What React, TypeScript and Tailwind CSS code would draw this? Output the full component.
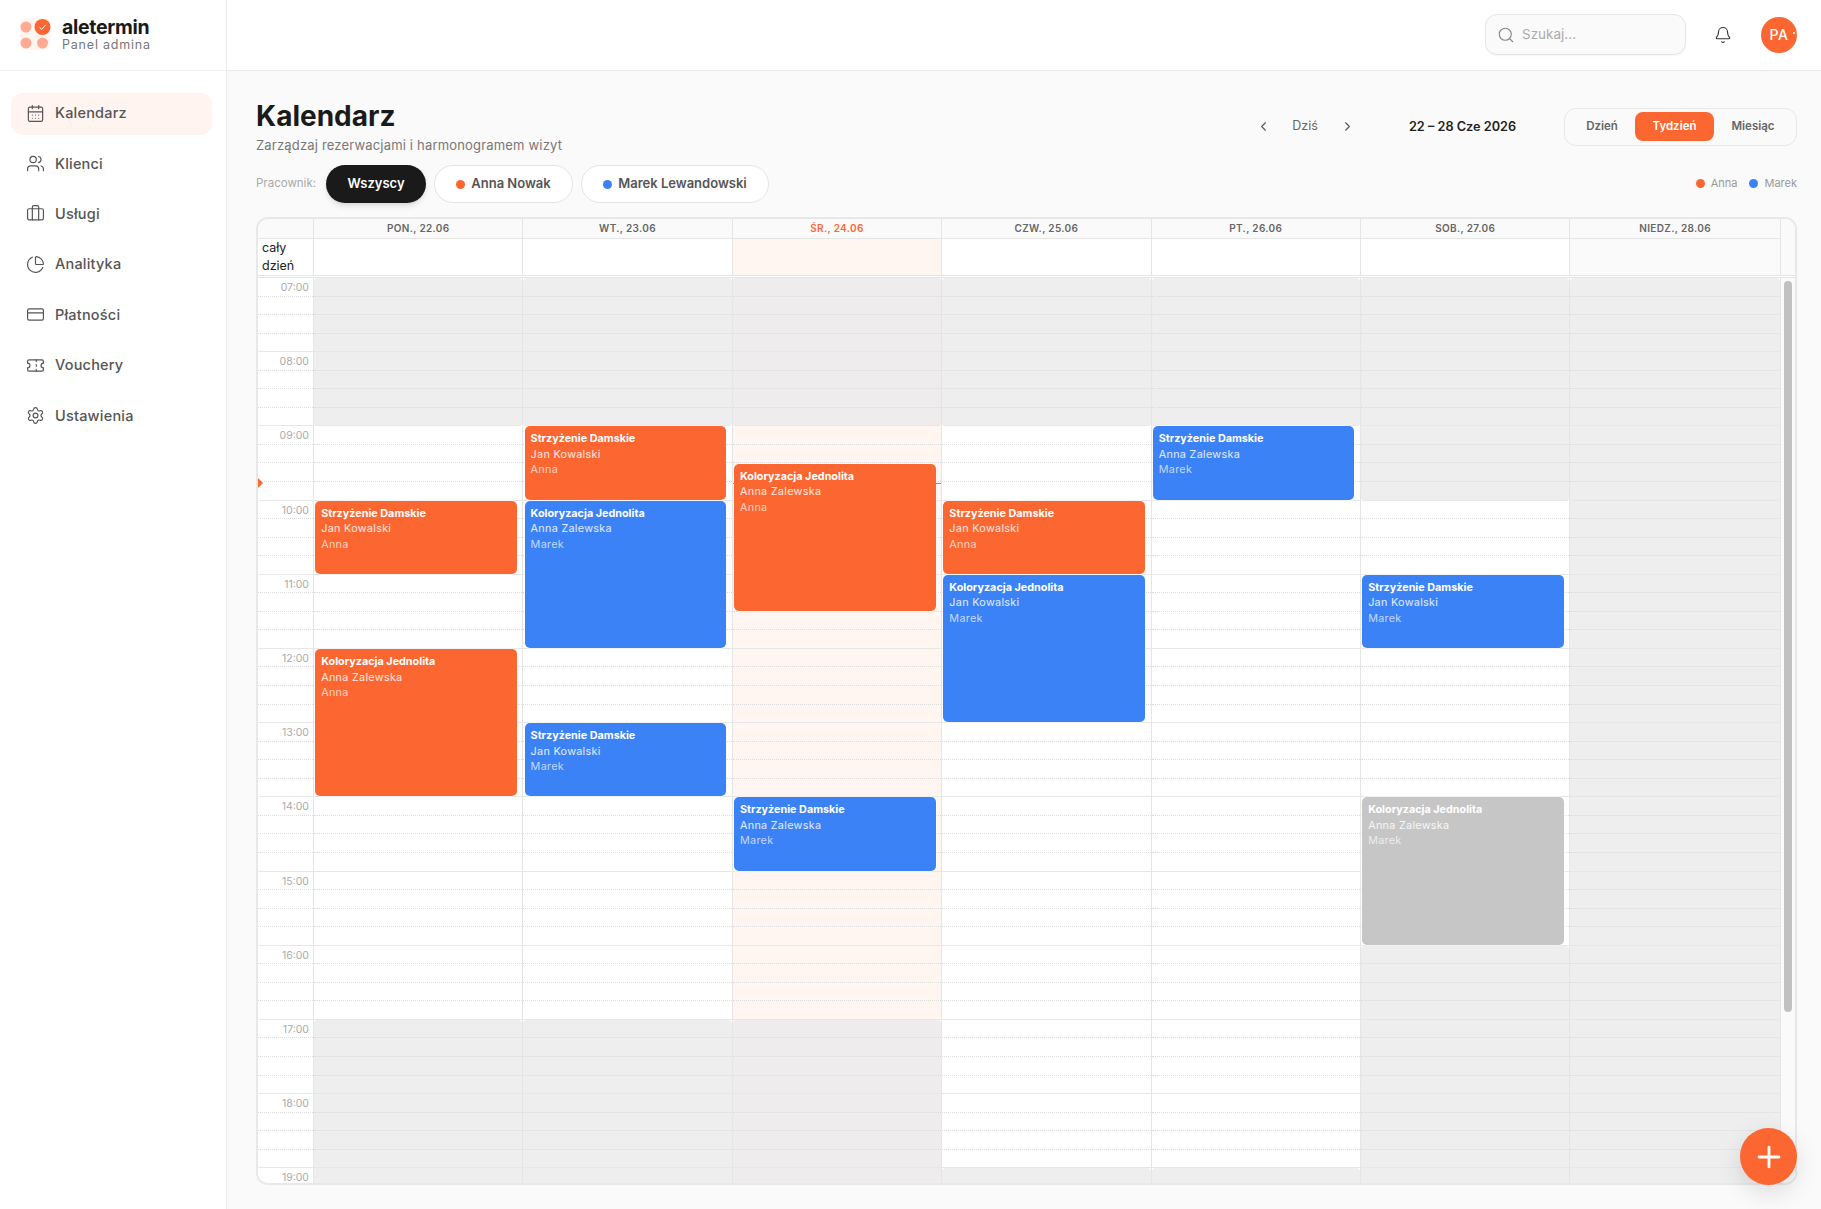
import {
  Bell,
  Briefcase,
  CalendarDays,
  ChartPie,
  ChevronLeft,
  ChevronRight,
  CreditCard,
  Plus,
  Search,
  Settings,
  Ticket,
  Users,
} from "lucide-react";

const HOUR = 74.2;
const SLOT = HOUR / 4;
const hours = [7, 8, 9, 10, 11, 12, 13, 14, 15, 16, 17, 18, 19];
const cols = "grid-cols-[55px_repeat(6,209.4px)_1fr_15px]";

const menuItems = [
  { id: "calendar", label: "Kalendarz", icon: CalendarDays, active: true },
  { id: "clients", label: "Klienci", icon: Users },
  { id: "services", label: "Usługi", icon: Briefcase },
  { id: "analytics", label: "Analityka", icon: ChartPie },
  { id: "payments", label: "Płatności", icon: CreditCard },
  { id: "vouchers", label: "Vouchery", icon: Ticket },
  { id: "settings", label: "Ustawienia", icon: Settings },
];

type Tone = "orange" | "blue" | "grey";
interface CalendarEvent {
  title: string;
  client: string;
  staff: string;
  start: number;
  end: number;
  tone: Tone;
}
interface Day {
  label: string;
  open: [number, number];
  today?: boolean;
  events: CalendarEvent[];
}

const cut = "Strzyżenie Damskie";
const color = "Koloryzacja Jednolita";
const jan = "Jan Kowalski";
const zal = "Anna Zalewska";

const days: Day[] = [
  {
    label: "PON., 22.06",
    open: [9, 17],
    events: [
      { title: cut, client: jan, staff: "Anna", start: 10, end: 11, tone: "orange" },
      { title: color, client: zal, staff: "Anna", start: 12, end: 14, tone: "orange" },
    ],
  },
  {
    label: "WT., 23.06",
    open: [9, 17],
    events: [
      { title: cut, client: jan, staff: "Anna", start: 9, end: 10, tone: "orange" },
      { title: color, client: zal, staff: "Marek", start: 10, end: 12, tone: "blue" },
      { title: cut, client: jan, staff: "Marek", start: 13, end: 14, tone: "blue" },
    ],
  },
  {
    label: "ŚR., 24.06",
    open: [9, 17],
    today: true,
    events: [
      { title: color, client: zal, staff: "Anna", start: 9.5, end: 11.5, tone: "orange" },
      { title: cut, client: zal, staff: "Marek", start: 14, end: 15, tone: "blue" },
    ],
  },
  {
    label: "CZW., 25.06",
    open: [9, 19],
    events: [
      { title: cut, client: jan, staff: "Anna", start: 10, end: 11, tone: "orange" },
      { title: color, client: jan, staff: "Marek", start: 11, end: 13, tone: "blue" },
    ],
  },
  {
    label: "PT., 26.06",
    open: [9, 19],
    events: [{ title: cut, client: zal, staff: "Marek", start: 9, end: 10, tone: "blue" }],
  },
  {
    label: "SOB., 27.06",
    open: [10, 16],
    events: [
      { title: cut, client: jan, staff: "Marek", start: 11, end: 12, tone: "blue" },
      { title: color, client: zal, staff: "Marek", start: 14, end: 16, tone: "grey" },
    ],
  },
  { label: "NIEDZ., 28.06", open: [0, 0], events: [] },
];

const toneClass: Record<Tone, string> = {
  orange: "bg-[#fc6630]",
  blue: "bg-[#3b82f6]",
  grey: "bg-[#c6c6c6]",
};

function Logo() {
  return (
    <svg width="34" height="34" viewBox="0 0 34 34" className="shrink-0 -mt-[2px]">
      <rect x="2" y="1" width="30" height="32" rx="6" fill="#fff6f2" />
      <circle cx="8" cy="10" r="5.5" fill="#ffab94" />
      <circle cx="24.5" cy="10" r="8" fill="#fc6630" />
      <path d="M21.5 10.2l2.2 2.1 3.8-4.2" fill="none" stroke="#fff" strokeWidth="1" />
      <circle cx="8" cy="26" r="5.5" fill="#ffab94" />
      <circle cx="24.5" cy="26" r="5.5" fill="#ffab94" />
    </svg>
  );
}

function SidebarNav() {
  return (
    <aside className="w-[227px] shrink-0 bg-white border-r border-[#e8e8e8] flex flex-col">
      <div className="h-[71px] shrink-0 border-b border-[#f2f2f2] flex items-center pl-[18px] pb-[1px] gap-[10px]">
        <Logo />
        <div className="flex flex-col">
          <span className="text-[19.5px] leading-[20px] font-bold text-[#1a1a1a] tracking-[-0.3px]">aletermin</span>
          <span className="text-[12.5px] leading-[15px] text-[#777777] tracking-[0.8px]">Panel admina</span>
        </div>
      </div>
      <nav className="flex flex-col gap-2 pl-[11px] pr-[14px] pt-[22px]">
        {menuItems.map((item) => (
          <div
            key={item.id}
            className={`h-[42.4px] rounded-xl flex items-center gap-[10px] pl-[15px] pb-[2px] text-[14.5px] font-medium tracking-[0.2px] text-[#555555] ${
              item.active ? "bg-[#fff4f0]" : ""
            }`}
          >
            <item.icon className="w-[19px] h-[19px] shrink-0" strokeWidth={1.5} />
            {item.label}
          </div>
        ))}
      </nav>
    </aside>
  );
}

function TopBar() {
  return (
    <header className="h-[71px] shrink-0 bg-white border-b border-[#e8e8e8] flex items-center justify-end pr-6 pb-[1px]">
      <div className="w-[201px] h-[41px] rounded-xl border border-[#e5e5e5] bg-[#fafafa] flex items-center gap-[7px] pl-[11px] text-[13.5px] text-[#aaaaaa] shadow-[0_1px_2px_rgba(0,0,0,0.04)]">
        <Search className="w-[18px] h-[18px] text-[#888888]" strokeWidth={1.5} />
        Szukaj...
      </div>
      <Bell className="w-[18px] h-[18px] ml-[28px] text-[#333333]" strokeWidth={1.5} />
      <div className="relative w-9 h-9 rounded-full bg-[#fc6630] ml-[29px] flex items-center justify-center text-[14px] font-medium text-white tracking-[0.6px]">
        PA
        <span className="absolute right-[2px] top-[15px] w-[2px] h-[2px] rounded-full bg-white" />
      </div>
    </header>
  );
}

function TitleRow() {
  return (
    <div className="h-[56px] shrink-0 flex items-center justify-between">
      <div className="flex flex-col">
        <h1 className="text-[28px] leading-[36px] font-bold text-[#1a1a1a]">Kalendarz</h1>
        <p className="mt-[1px] text-[13px] leading-[20px] tracking-[0.18px] text-[#777777]">
          Zarządzaj rezerwacjami i harmonogramem wizyt
        </p>
      </div>
      <div className="flex items-center mt-[1px]">
        <div className="w-7 flex justify-center text-[#555555]">
          <ChevronLeft className="w-[15px] h-[15px]" strokeWidth={1.75} />
        </div>
        <span className="w-14 text-center text-[12.5px] text-[#666666]">Dziś</span>
        <div className="w-7 flex justify-center text-[#555555]">
          <ChevronRight className="w-[15px] h-[15px]" strokeWidth={1.75} />
        </div>
        <span className="w-[203px] text-center text-[12.7px] font-semibold text-[#222222]">22 – 28 Cze 2026</span>
        <div className="w-[233px] h-[38px] rounded-xl border border-[#e8e8e8] bg-[#fafafa] flex items-center pl-[4px] text-[11.5px] font-semibold text-[#666666]">
          <span className="w-[66px] text-center">Dzień</span>
          <span className="w-[79px] h-[29px] rounded-lg bg-[#fc6630] text-white flex items-center justify-center">Tydzień</span>
          <span className="w-[78px] text-center">Miesiąc</span>
        </div>
      </div>
    </div>
  );
}

function FilterRow() {
  return (
    <div className="h-[38px] mt-[11px] shrink-0 flex items-center">
      <span className="w-[70px] text-[11.5px] text-[#aaaaaa]">Pracownik:</span>
      <div className="w-[100px] h-[38px] rounded-full bg-[#1a1a1a] text-white text-[13px] font-semibold flex items-center justify-center shadow-md">
        Wszyscy
      </div>
      <div className="w-[139px] h-[38px] ml-2 rounded-full bg-white border border-[#e5e5e5] text-[#555555] text-[13px] font-semibold flex items-center justify-center gap-[6px]">
        <span className="w-[9px] h-[9px] rounded-full bg-[#fc6630]" />
        Anna Nowak
      </div>
      <div className="w-[188px] h-[38px] ml-2 rounded-full bg-white border border-[#e5e5e5] text-[#555555] text-[13px] font-semibold flex items-center justify-center gap-[6px]">
        <span className="w-[9px] h-[9px] rounded-full bg-[#3b82f6]" />
        Marek Lewandowski
      </div>
      <div className="ml-auto pb-[2px] flex items-center text-[11px] text-[#999999]">
        <span className="w-[9px] h-[9px] rounded-full bg-[#fc6630] mr-[6px]" />
        Anna
        <span className="w-[9px] h-[9px] rounded-full bg-[#3b82f6] ml-[12px] mr-[6px]" />
        Marek
      </div>
    </div>
  );
}

function EventCard({ event }: { event: CalendarEvent }) {
  return (
    <div
      className={`absolute left-[1.2px] right-[5.5px] rounded-[5px] px-[6px] pt-[5px] text-[10.8px] leading-[15.5px] shadow-[0_0_0_1px_rgba(255,255,255,0.5)] ${toneClass[event.tone]}`}
      style={{ top: (event.start - 7) * HOUR, height: (event.end - event.start) * HOUR - 1 }}
    >
      <div className="font-bold text-white">{event.title}</div>
      <div className="text-white/85 tracking-[0.3px]">{event.client}</div>
      <div className="text-white/70 tracking-[0.3px]">{event.staff}</div>
    </div>
  );
}

function DayColumn({ day }: { day: Day }) {
  const isOpen = (t: number) => t >= day.open[0] && t < day.open[1];
  return (
    <div className={`relative border-l border-[#e5e5e5] ${day.today ? "bg-[#fff6f2]" : "bg-white"}`}>
      {hours.map((h) =>
        [0, 1, 2, 3].map((q) => {
          const t = h + q / 4;
          const closed = !isOpen(t);
          const startsClosed = closed && (t === 7 || isOpen(t - 0.25));
          const endsClosed = closed && isOpen(t + 0.25);
          return (
            <div
              key={t}
              style={{ height: SLOT }}
              className={`border-b ${q === 3 ? "border-solid border-[#e7e7e7]" : "border-dotted border-[#dcdcdc]"} ${
                closed ? (day.today ? "bg-[#eeecec]" : "bg-[#eeeeee]") : ""
              } ${startsClosed ? "rounded-t-[4px]" : ""} ${endsClosed ? "rounded-b-[3px]" : ""}`}
            />
          );
        }),
      )}
      {day.events.map((event) => (
        <EventCard key={event.title + event.start} event={event} />
      ))}
      {day.today && <div className="absolute left-0 right-0 top-[205px] h-[1px] bg-[#fc6630]" />}
    </div>
  );
}

function CalendarGrid() {
  return (
    <div className="flex-1 min-h-0 mt-[14px] rounded-xl border-2 border-[#e8e8e8] bg-white overflow-hidden flex flex-col">
      <div className={`grid ${cols} h-5 shrink-0 bg-[#fafafa]`}>
        <div className="border-b border-[#e5e5e5]" />
        {days.map((day) => (
          <div
            key={day.label}
            className={`border-l border-b border-[#e5e5e5] flex items-center justify-center text-[10px] font-semibold tracking-[0.35px] ${
              day.today ? "text-[#fc6630]" : "text-[#666666]"
            }`}
          >
            {day.label}
          </div>
        ))}
        <div className="border-l border-[#e5e5e5]" />
      </div>
      <div className={`grid ${cols} h-[39px] shrink-0 border-b-[3px] border-double border-[#e5e5e5] bg-white`}>
        <div className="pl-1 text-[12.5px] leading-[17.5px] text-[#222222]">
          cały
          <br />
          dzień
        </div>
        {days.map((day) => (
          <div
            key={day.label}
            className={`border-l border-[#e5e5e5] ${day.today ? "bg-[#fff6f2]" : ""} ${day.open[1] === 0 ? "bg-[#fafafa]" : ""}`}
          />
        ))}
        <div className="border-l border-[#e5e5e5] bg-[#fafafa]" />
      </div>
      <div className={`relative grid ${cols} flex-1 min-h-0 overflow-hidden`}>
        <div className="bg-white">
          {hours.map((h) => (
            <div key={h}>
              <div style={{ height: SLOT }} className="border-b border-dotted border-[#dcdcdc] pr-1 text-right text-[10.5px] leading-[20px] text-[#aaaaaa]">
                {String(h).padStart(2, "0")}:00
              </div>
              <div style={{ height: SLOT }} className="border-b border-dotted border-[#dcdcdc]" />
              <div style={{ height: SLOT }} className="border-b border-dotted border-[#dcdcdc]" />
              <div style={{ height: SLOT }} className="border-b border-[#e7e7e7]" />
            </div>
          ))}
        </div>
        {days.map((day) => (
          <DayColumn key={day.label} day={day} />
        ))}
        <div className="border-l border-[#e5e5e5] bg-[#fafafa] pt-[3px] flex justify-center">
          <div className="w-2 h-[731px] rounded-full bg-[#c1c1c1]" />
        </div>
        <div className="absolute left-0 top-[200px] border-y-[5px] border-l-[5px] border-y-transparent border-l-[#fc6630]" />
      </div>
    </div>
  );
}

export default function App() {
  return (
    <div className="relative h-screen flex overflow-hidden bg-[#fafafa] font-['Inter',sans-serif]">
      <SidebarNav />
      <div className="flex-1 min-w-0 flex flex-col">
        <TopBar />
        <main className="flex-1 min-h-0 flex flex-col pl-[29px] pr-6 pt-[27px] pb-6">
          <TitleRow />
          <FilterRow />
          <CalendarGrid />
        </main>
      </div>
      <button className="absolute right-6 bottom-6 w-[57px] h-[57px] rounded-full bg-[#fc6630] flex items-center justify-center text-white shadow-[0_8px_24px_rgba(0,0,0,0.12)]">
        <Plus className="w-[34px] h-[34px]" strokeWidth={2} />
      </button>
    </div>
  );
}
